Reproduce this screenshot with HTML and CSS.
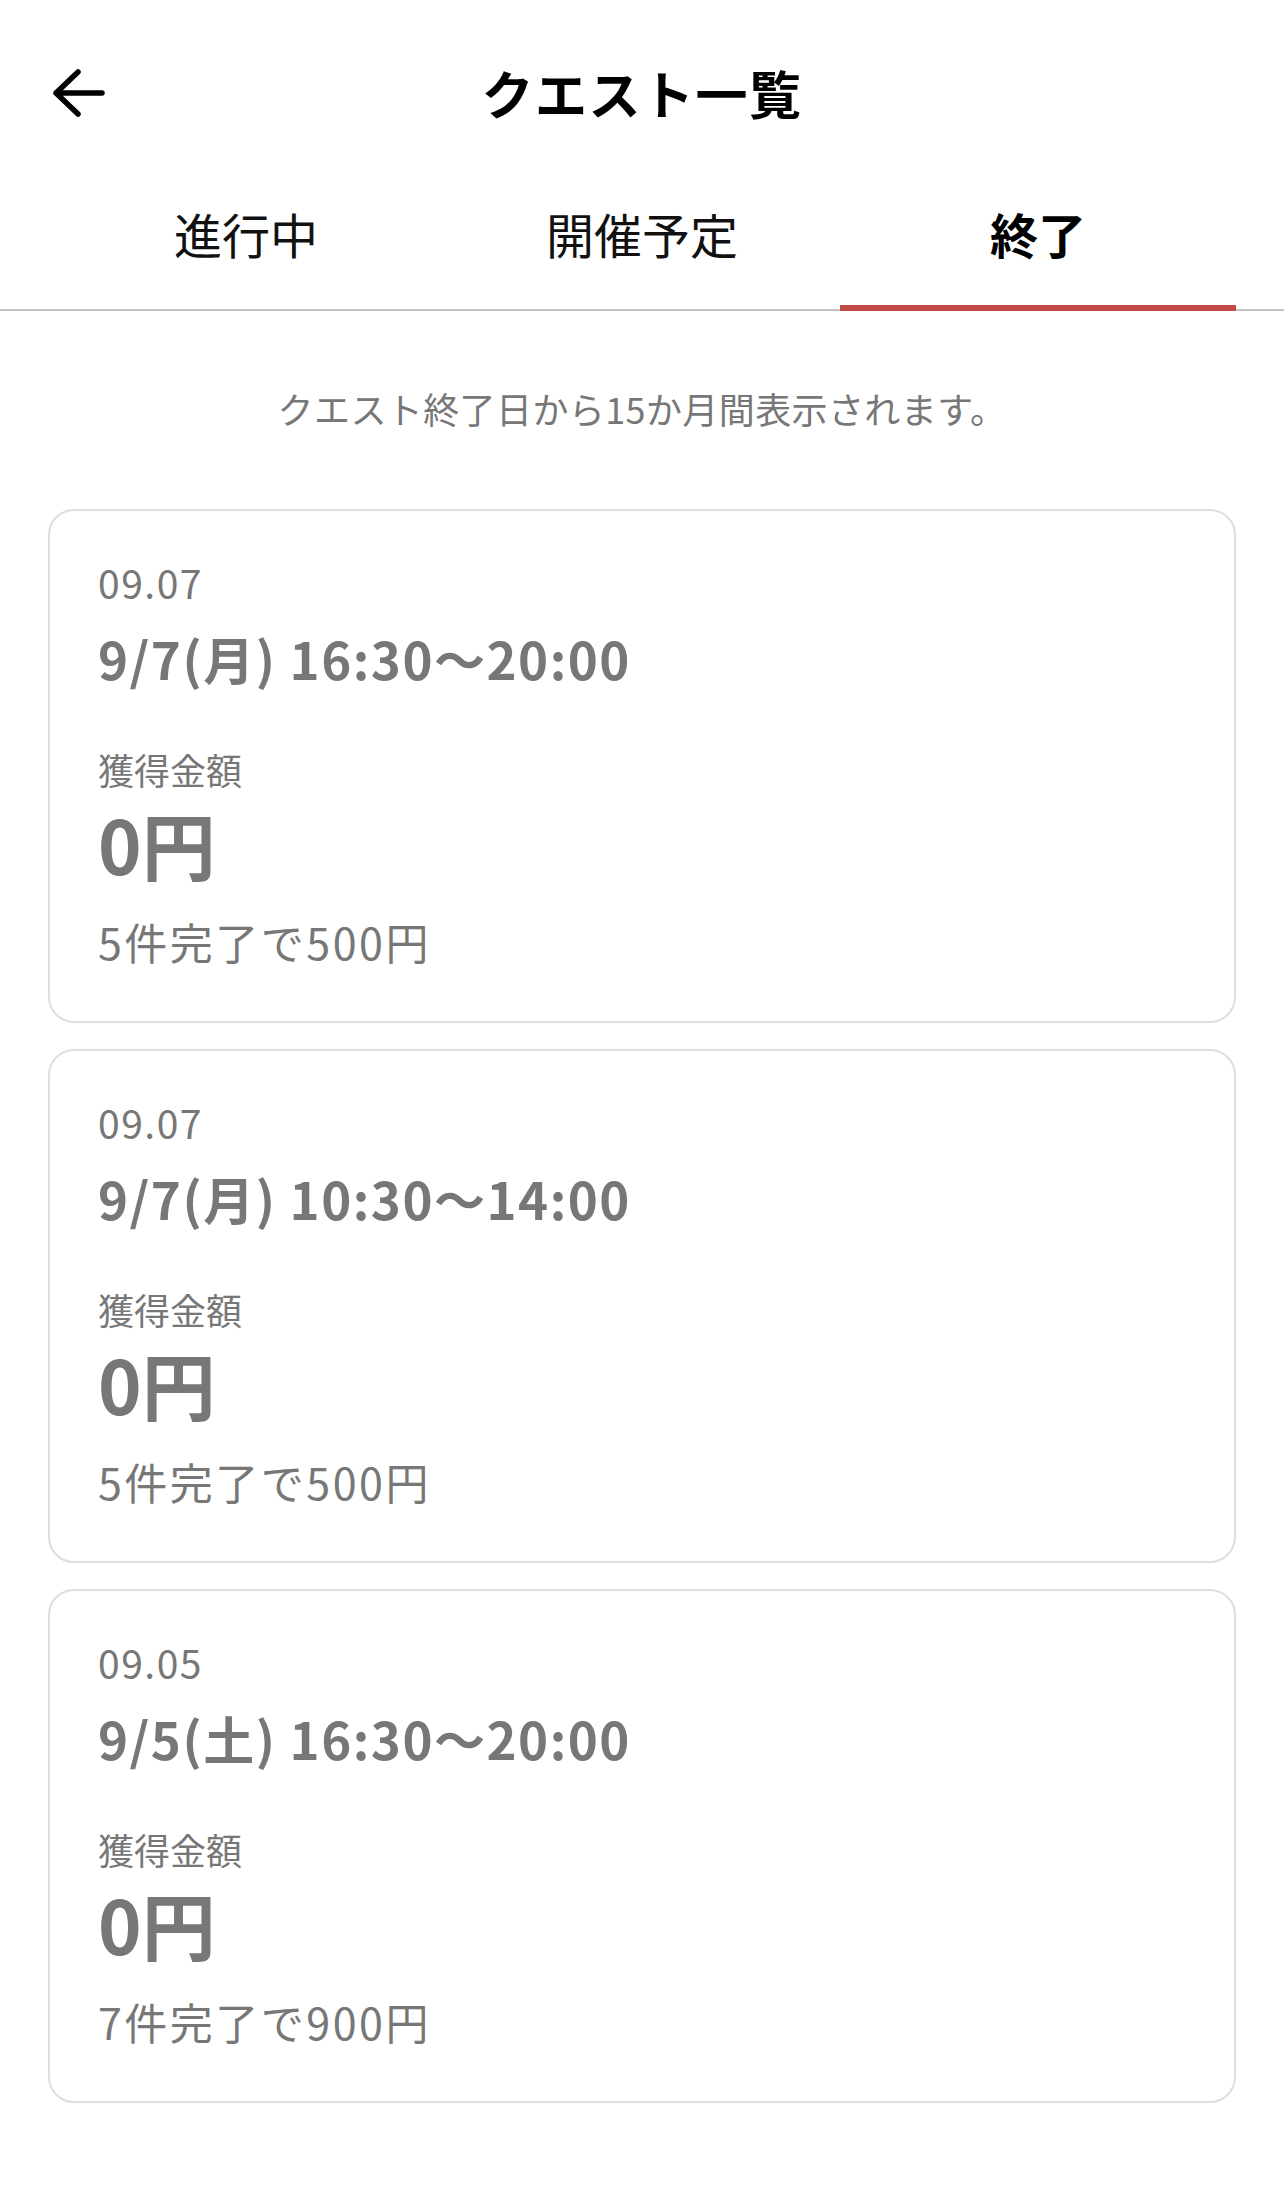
FILE: index.html
```html
<!DOCTYPE html>
<html lang="ja">

<head>
    <meta charset="UTF-8">
    <meta name="viewport" content="width=device-width, initial-scale=1.0">
    <title>クエスト一覧</title>
    <link rel="stylesheet" href="styles.css">
</head>

<body>
    <header class="top-bar">
        <div class="back">
            <svg class="back-icon" viewBox="0 0 52 48" width="52" height="48">
                <path d="M3 24 H49 M3 24 L25 3 M3 24 L25 45" fill="none" stroke="#000" stroke-width="5.5" stroke-linecap="round" stroke-linejoin="round"/>
            </svg>
        </div>
        <h1>クエスト一覧</h1>
        <div></div>
    </header>

    <nav class="tabs">
        <div class="tab">進行中</div>
        <div class="tab">開催予定</div>
        <div class="tab active">終了</div>
    </nav>

    <p class="notice">クエスト終了日から15か月間表示されます。</p>

    <ul class="quest-list">
        <li class="quest-card">
            <div class="quest-date">09.07</div>
            <div class="quest-time">9/7(月) 16:30〜20:00</div>
            <div class="quest-label">獲得金額</div>
            <div class="quest-amount">0円</div>
            <div class="quest-note">5件完了で500円</div>
        </li>
        <li class="quest-card">
            <div class="quest-date">09.07</div>
            <div class="quest-time">9/7(月) 10:30〜14:00</div>
            <div class="quest-label">獲得金額</div>
            <div class="quest-amount">0円</div>
            <div class="quest-note">5件完了で500円</div>
        </li>
        <li class="quest-card">
            <div class="quest-date">09.05</div>
            <div class="quest-time">9/5(土) 16:30〜20:00</div>
            <div class="quest-label">獲得金額</div>
            <div class="quest-amount">0円</div>
            <div class="quest-note">7件完了で900円</div>
        </li>
    </ul>
</body>

</html>
```

FILE: styles.css
```css
* {
    margin: 0;
    padding: 0;
    box-sizing: border-box;
}

body {
    background: #fff;
    font-family: "Noto Sans CJK JP", "Noto Sans", sans-serif;
    color: #000;
}

.top-bar {
    display: grid;
    grid-template-columns: 1fr auto 1fr;
    align-items: center;
    padding: 60px 53px 0;
}

.back {
    display: flex;
    align-items: center;
}

.back-icon {
    display: block;
}

.top-bar h1 {
    font-size: 52px;
    font-weight: bold;
    line-height: 66px;
    letter-spacing: 1.5px;
}

.tabs {
    display: flex;
    padding: 0 48px;
    border-bottom: 2px solid #c2c2c2;
}

.tab {
    flex: 1;
    text-align: center;
    font-size: 48px;
    line-height: 60px;
    padding: 77px 0 42px;
    border-bottom: 6px solid transparent;
    margin-bottom: -2px;
    color: #111;
}

.tab.active {
    font-weight: bold;
    color: #000;
    border-bottom-color: #c24a45;
}

.notice {
    text-align: center;
    font-size: 36px;
    line-height: 54px;
    letter-spacing: 0.4px;
    color: #777;
    padding-top: 70px;
}

.quest-list {
    list-style: none;
    padding: 74px 48px 0;
    display: flex;
    flex-direction: column;
    gap: 26px;
}

.quest-card {
    border: 2px solid #dedede;
    border-radius: 26px;
    padding: 47px 48px 50px;
    color: #777;
}

.quest-date {
    font-size: 39px;
    line-height: 48px;
    letter-spacing: 1.5px;
}

.quest-time {
    font-size: 51px;
    font-weight: bold;
    line-height: 60px;
    margin-top: 22px;
    letter-spacing: 1.5px;
}

.quest-label {
    font-size: 36px;
    line-height: 48px;
    margin-top: 57px;
}

.quest-amount {
    font-size: 74px;
    font-weight: bold;
    line-height: 84px;
    margin-top: 8px;
}

.quest-note {
    font-size: 43px;
    line-height: 60px;
    margin-top: 26px;
    letter-spacing: 2.5px;
}
```
